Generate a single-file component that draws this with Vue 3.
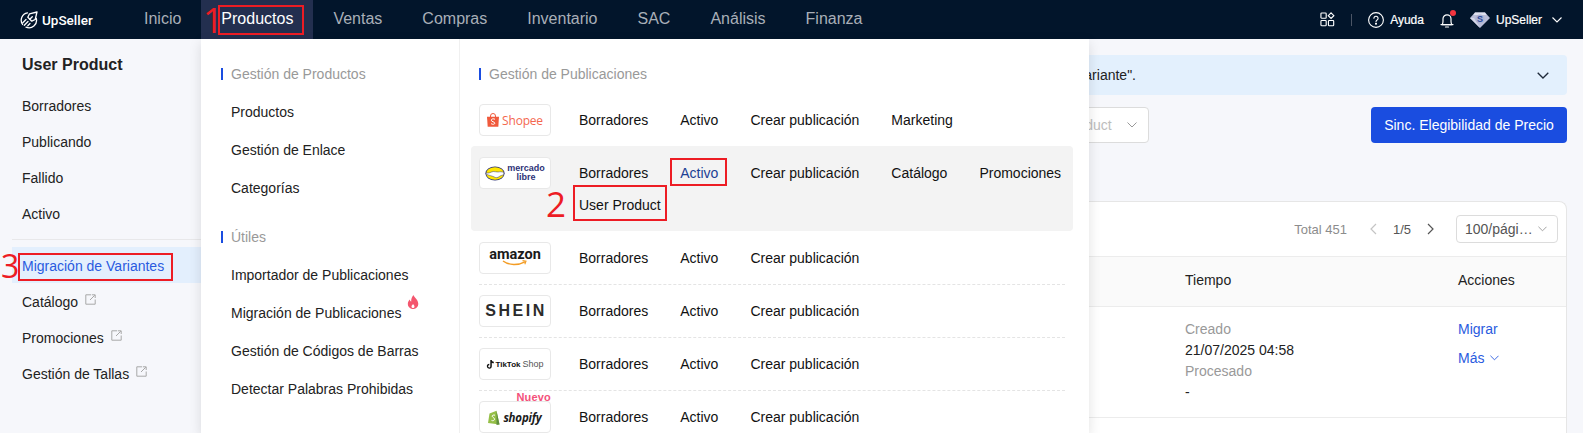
<script setup>
const nav = ['Inicio', 'Productos', 'Ventas', 'Compras', 'Inventario', 'SAC', 'Análisis', 'Finanza']
const side = [
  { label: 'Borradores' },
  { label: 'Publicando' },
  { label: 'Fallido' },
  { label: 'Activo' },
]
const side2 = [
  { label: 'Migración de Variantes', active: true },
  { label: 'Catálogo', ext: true },
  { label: 'Promociones', ext: true },
  { label: 'Gestión de Tallas', ext: true },
]
const basic = ['Borradores', 'Activo', 'Crear publicación']
const platforms = [
  { key: 'shopee', links: [...basic, 'Marketing'] },
  { key: 'meli', links: [...basic, 'Catálogo', 'Promociones', 'User Product'], hover: true },
  { key: 'amazon', links: basic, dashed: true },
  { key: 'shein', links: basic, dashed: true },
  { key: 'tiktok', links: basic, dashed: true },
  { key: 'shopify', links: basic },
]
</script>

<template>
  <div class="page">
    <header class="topbar">
      <div class="brand">
        <svg class="brand-icon" viewBox="0 0 18 18" fill="none" stroke="#fff" stroke-width="1.3" stroke-linecap="round" stroke-linejoin="round">
          <path d="M7.500 1.800A7.500 7.500 0 0 0 2.600 13.500" />
          <path d="M16.300 7.500A7.500 7.500 0 0 1 6 16.200" />
          <path d="M17 1 9.500 2.800 7.800 6.200l4 4 3.400-1.700z" />
          <path d="M12.300 5.700 9.800 8.200" />
          <path d="M6 8.500 2.800 11.700M8 10.500l-3.700 3.700M10 12.500 7.800 14.700" />
        </svg>
        <span>UpSeller</span>
      </div>
      <nav class="nav">
        <a v-for="n in nav" :key="n" class="nav-item" :class="{ current: n === 'Productos' }">{{ n }}</a>
      </nav>
      <div class="top-right">
        <svg class="ic-apps" viewBox="0 0 16 16" fill="none" stroke="#fff" stroke-width="1.2">
          <rect x="1" y="1" width="5.6" height="5.6" rx=".8" />
          <rect x="1" y="9" width="5.6" height="5.6" rx=".8" />
          <rect x="9" y="9" width="5.6" height="5.6" rx=".8" />
          <path d="m11.8.9 3 3-3 3-3-3z" />
        </svg>
        <i class="top-sep"></i>
        <svg class="ic-help" viewBox="0 0 16 16" fill="none" stroke="#fff" stroke-width="1.1">
          <circle cx="8" cy="8" r="7.4" />
          <path d="M5.9 6.3a2.1 2.1 0 1 1 3.2 1.8c-.7.4-1.1.8-1.1 1.6" stroke-linecap="round" />
          <circle cx="8" cy="11.7" r=".5" fill="#fff" />
        </svg>
        <span class="top-label help-label">Ayuda</span>
        <span class="bell">
          <svg viewBox="0 0 14 16" fill="none" stroke="#fff" stroke-width="1.2">
            <path d="M2.2 12.6c.6-1 .8-2 .8-3.4V6.8a4 4 0 0 1 8 0v2.4c0 1.4.2 2.4.8 3.4z" stroke-linejoin="round" />
            <path d="M1 12.6h12M5.500 15h3" stroke-linecap="round" />
          </svg>
          <i class="bell-dot"></i>
        </span>
        <svg class="gem" viewBox="0 0 20 16">
          <path d="M5 .5h10L20 6l-10 10L0 6z" fill="#b9bdd8" />
          <path d="M5 .5h10L16.500 3H3.500z" fill="#dfe1ef" />
          <path d="M0 6l10 10-6-10z" fill="#d5d7e8" />
          <circle cx="10" cy="7" r="4.600" fill="#aeb4d4" />
          <text x="10" y="10.200" text-anchor="middle" class="gem-s">S</text>
        </svg>
        <span class="top-label user-label">UpSeller</span>
        <svg class="top-caret" viewBox="0 0 10 6" fill="none" stroke="#fff" stroke-width="1.100"><path d="m.5.5 4.500 4.500L9.500.5" /></svg>
      </div>
    </header>

    <div class="body">
      <aside class="sidebar">
        <h2 class="side-title">User Product</h2>
        <a v-for="s in side" :key="s.label" class="side-item">{{ s.label }}</a>
        <div class="side-div"></div>
        <a v-for="s in side2" :key="s.label" class="side-item" :class="{ active: s.active }">
          {{ s.label }}
          <svg v-if="s.ext" class="ext" viewBox="0 0 11 11" fill="none" stroke="#a8a8a8" stroke-width="1">
            <path d="M6 .8H.8v9.400h9.400V5.500" />
            <path d="M5 6 9.800 1.200M6.800.8h3.400V4" />
          </svg>
        </a>
      </aside>

      <main class="main">
        <div class="alert">
          <span class="alert-text">Para migrar, seleccione la publicación y haga clic en "Migrar variante".</span>
          <svg class="alert-caret" viewBox="0 0 12 7" fill="none" stroke="#1f2a3a" stroke-width="1.300"><path d="m.7.7 5.300 5.300L11.300.7" /></svg>
        </div>
        <div class="filters">
          <div class="filter-left">
            <div class="select">
              <span>User Product</span>
              <svg viewBox="0 0 10 6" fill="none" stroke="#999" stroke-width="1"><path d="m.5.5 4.500 4.500L9.500.5" /></svg>
            </div>
          </div>
          <button class="primary">Sinc. Elegibilidad de Precio</button>
        </div>
        <section class="card">
          <div class="card-bar">
            <span class="total">Total 451</span>
            <svg class="pg" viewBox="0 0 8 12" fill="none" stroke="#c4c4c4" stroke-width="1.200"><path d="M7 1 2 6l5 5" /></svg>
            <span class="pg-num">1/5</span>
            <svg class="pg" viewBox="0 0 8 12" fill="none" stroke="#555" stroke-width="1.200"><path d="m1 1 5 5-5 5" /></svg>
            <div class="per-page">
              <span>100/pági…</span>
              <svg viewBox="0 0 10 6" fill="none" stroke="#999" stroke-width="1"><path d="m.5.5 4.500 4.500L9.500.5" /></svg>
            </div>
          </div>
          <div class="table-row table-head">
            <div></div>
            <div>Tiempo</div>
            <div>Acciones</div>
          </div>
          <div class="table-row table-data">
            <div></div>
            <div class="times">
              <span class="muted">Creado</span>
              <span>21/07/2025 04:58</span>
              <span class="muted">Procesado</span>
              <span>-</span>
            </div>
            <div class="actions">
              <a>Migrar</a>
              <a class="more">Más
                <svg viewBox="0 0 10 6" fill="none" stroke="#2a5be0" stroke-width="1"><path d="m.5.5 4.500 4.500L9.500.5" /></svg>
              </a>
            </div>
          </div>
        </section>
      </main>
    </div>

    <div class="menu">
      <div class="menu-left">
        <h3 class="menu-title">Gestión de Productos</h3>
        <a class="menu-link">Productos</a>
        <a class="menu-link">Gestión de Enlace</a>
        <a class="menu-link">Categorías</a>
        <h3 class="menu-title second">Útiles</h3>
        <a class="menu-link">Importador de Publicaciones</a>
        <a class="menu-link">Migración de Publicaciones
          <svg class="flame" viewBox="0 0 12 14"><path d="M6.500 0c.5 2.500 4.800 4.500 4.800 9A5.200 5 0 0 1 .8 9c0-2.200 1.200-3.500 2-4.500.2 1.200.7 1.800 1.400 2.200C4 4 5 1.800 6.500 0z" fill="#f4566e" /><path d="M6 9c.3.8 1.500 1.300 1.500 2.600a1.500 1.500 0 0 1-3 0C4.500 10.500 5.500 9.900 6 9z" fill="#fff" /></svg>
        </a>
        <a class="menu-link">Gestión de Códigos de Barras</a>
        <a class="menu-link">Detectar Palabras Prohibidas</a>
      </div>
      <div class="menu-right">
        <h3 class="menu-title">Gestión de Publicaciones</h3>
        <div v-for="p in platforms" :key="p.key" class="plat" :class="{ hover: p.hover, dashed: p.dashed }">
          <div class="plat-logo" :class="'logo-' + p.key">
            <template v-if="p.key === 'shopee'">
              <svg class="shopee-bag" viewBox="0 0 12 14">
                <path d="M0 3.800h12l-.7 10H.7z" fill="#f05a3c" />
                <path d="M3.500 4V3a2.500 2.500 0 0 1 5 0v1" fill="none" stroke="#f05a3c" stroke-width="1" />
                <path d="M8 6.300C6.800 5.500 4.300 5.600 4.300 7.200c0 1.900 3.500 1.300 3.500 3 0 1.300-2.300 1.400-3.700.5" fill="none" stroke="#fff" stroke-width="1" />
              </svg>
              <span class="shopee-text">Shopee</span>
            </template>
            <template v-else-if="p.key === 'meli'">
              <svg class="meli-mark" viewBox="0 0 20 15">
                <ellipse cx="10" cy="7.500" rx="9.600" ry="7" fill="#2d3277" />
                <ellipse cx="10" cy="7.500" rx="8.800" ry="6.200" fill="#ffe600" />
                <path d="M1.200 6.800c2.500 1 4.500-.8 7-1.300 2-.3 3 .8 5 .5 2-.3 3.800-.5 5.600.6v1.600c-1.500 1.500-3 1-4.500 2.300-1.500 1.300-3.500 1.500-5 .5-2-1-5.500-1.700-8.100-2.800z" fill="#fff" stroke="#2d3277" stroke-width=".5" />
              </svg>
              <span class="meli-text">mercado<br />libre</span>
            </template>
            <template v-else-if="p.key === 'amazon'">
              <span class="amazon-text">amazon</span>
              <svg class="amazon-smile" viewBox="0 0 26 6" fill="none" stroke="#f39c24" stroke-width="1.400">
                <path d="M1 1c6 4.500 15 4.500 22 .8" />
                <path d="M20.500.6l3.500.6-1.200 3" stroke-width="1.100" />
              </svg>
            </template>
            <span v-else-if="p.key === 'shein'" class="shein-text">SHEIN</span>
            <template v-else-if="p.key === 'tiktok'">
              <svg class="tt-note" viewBox="0 0 8 9"><path d="M4.300 0h1.500c.1 1 .8 1.700 2 1.800v1.500a3.400 3.400 0 0 1-2-.6v3.400A2.500 2.500 0 1 1 3.300 3.700v1.500a1.100 1.100 0 1 0 1 1z" fill="#111" /></svg>
              <span class="tt-bold">TikTok</span>
              <span class="tt-shop">Shop</span>
            </template>
            <template v-else>
              <svg class="sf-bag" viewBox="0 0 12 15">
                <path d="M1.500 3.500 8.500.8l3 13.800L0 13z" fill="#95bf47" />
                <path d="M8.500.8l3 13.800-3 .3z" fill="#5e8e3e" />
                <path d="M7 5.200C5.500 4.700 4 5.300 4.200 6.300c.2 1.100 2.300 1.300 2.300 2.900 0 1.500-1.800 1.800-3 1.200" fill="none" stroke="#fff" stroke-width="1" />
              </svg>
              <span class="sf-text">shopify</span>
              <span class="nuevo">Nuevo</span>
            </template>
          </div>
          <div class="plat-links">
            <a v-for="l in p.links" :key="l" :class="{ hot: p.hover && l === 'Activo' }">{{ l }}</a>
          </div>
        </div>
      </div>
    </div>

    <i class="mark mark-prod"></i>
    <i class="mark mark-activo"></i>
    <i class="mark mark-up"></i>
    <i class="mark mark-mig"></i>
    <span class="num num-1">1</span>
    <span class="num num-2">2</span>
    <span class="num num-3">3</span>
  </div>
</template>

<style>
html, body { margin: 0; background: #f6f7fb; }
</style>

<style scoped>
.page {
  position: relative;
  width: 1583px;
  height: 433px;
  overflow: hidden;
  background: #f6f7fb;
  font-family: "Liberation Sans", Arial, sans-serif;
  font-size: 14px;
  color: #222;
}
a { color: inherit; text-decoration: none; }
h2, h3 { margin: 0; }

/* top bar */
.topbar {
  height: 39px;
  background: #02152b;
  display: flex;
  align-items: stretch;
  padding-right: 21px;
}
.brand {
  width: 124px;
  box-sizing: border-box;
  padding-left: 20px;
  display: flex;
  align-items: center;
  gap: 4px;
  color: #fff;
  font: 500 13.5px Roboto, "Liberation Sans", sans-serif;
}
.brand-icon { width: 18px; height: 18px; }
.nav { display: flex; }
.nav-item {
  padding: 0 20px;
  line-height: 37px;
  font-size: 16px;
  color: #a9afb8;
}
.nav-item.current { background: #232f4f; color: #fff; }
.top-right {
  margin-left: auto;
  display: flex;
  align-items: center;
  color: #fff;
}
.ic-apps { width: 15px; height: 15px; }
.top-sep { width: 1px; height: 12px; background: #4b5566; margin: 0 16px; }
.ic-help { width: 16px; height: 16px; }
.top-label { font-size: 12px; font-weight: 500; -webkit-text-stroke: .2px #fff; }
.help-label { margin-left: 6px; }
.bell { position: relative; width: 14px; height: 16px; margin-left: 16px; }
.bell svg { display: block; width: 14px; height: 16px; }
.bell-dot {
  position: absolute;
  top: -2px;
  right: -2px;
  width: 6px;
  height: 6px;
  border-radius: 50%;
  background: #f5353f;
}
.gem { width: 20px; height: 16px; margin-left: 16px; }
.gem-s { font: 700 9px "Liberation Sans", sans-serif; fill: #2b4a9a; }
.user-label { margin-left: 6px; }
.top-caret { width: 10px; height: 6px; margin-left: 10px; }

/* shell */
.body { display: flex; height: 394px; }
.sidebar {
  width: 201px;
  flex: none;
  padding-top: 13px;
  box-sizing: border-box;
}
.side-title {
  font-size: 16px;
  font-weight: 700;
  line-height: 26px;
  padding-left: 22px;
  margin-bottom: 10px;
  color: #222;
}
.side-item {
  display: block;
  height: 36px;
  line-height: 36px;
  margin-left: 12px;
  padding-left: 10px;
}
.side-item.active {
  height: 35px;
  padding-top: 1px;
  margin-bottom: 1px;
  background: #e3effd;
  color: #2a5be0;
}
.ext { width: 11px; height: 11px; margin-left: 3px; vertical-align: 2px; }
.side-div { height: 1px; background: #e8e8ea; margin: 7px 0 7px 12px; }

.main { flex: 1; min-width: 0; padding: 16px 16px 0; }
.alert {
  height: 40px;
  border-radius: 4px;
  background: #e3f0fd;
  display: flex;
  align-items: center;
  justify-content: space-between;
  padding-right: 18px;
}
.alert-text {
  width: 919px;
  text-align: right;
  white-space: nowrap;
  overflow: hidden;
}
.alert-caret { width: 12px; height: 7px; }
.filters {
  margin-top: 12px;
  height: 36px;
  display: flex;
  justify-content: space-between;
}
.filter-left { width: 932px; display: flex; justify-content: flex-end; }
.select {
  width: 130px;
  box-sizing: border-box;
  border: 1px solid #dcdcdc;
  border-radius: 4px;
  background: #fff;
  display: flex;
  align-items: center;
  justify-content: space-between;
  padding: 0 11px 0 10px;
  color: #bdbdbd;
}
.select svg { width: 10px; height: 6px; }
.primary {
  width: 196px;
  border: 0;
  border-radius: 4px;
  background: #1a4de0;
  color: #fff;
  font: 14px "Liberation Sans", Arial, sans-serif;
  padding: 0;
}
.card {
  margin-top: 58px;
  background: #fff;
  border: 1px solid #e6e6e6;
  border-bottom: 0;
  border-radius: 8px 8px 0 0;
  height: 240px;
}
.card-bar {
  height: 54px;
  box-sizing: border-box;
  display: flex;
  align-items: center;
  justify-content: flex-end;
  padding-right: 8px;
}
.total { color: #8c8c8c; font-size: 13px; margin-right: 22px; }
.pg { width: 8px; height: 12px; }
.pg-num { font-size: 13px; color: #555; margin: 0 16px; }
.per-page {
  margin-left: 21px;
  width: 102px;
  height: 28px;
  box-sizing: border-box;
  border: 1px solid #dcdcdc;
  border-radius: 4px;
  display: flex;
  align-items: center;
  justify-content: space-between;
  padding: 0 10px 0 8px;
  color: #555;
}
.per-page svg { width: 9px; height: 6px; }
.table-row {
  display: grid;
  grid-template-columns: 1fr 273px 108px;
  border-top: 1px solid #ececec;
}
.table-head { height: 49px; line-height: 47px; background: #fafafa; }
.table-data { height: 110px; border-bottom: 1px solid #ececec; }
.times {
  display: flex;
  flex-direction: column;
  padding-top: 12px;
  line-height: 21px;
}
.muted { color: #999; }
.actions {
  display: flex;
  flex-direction: column;
  padding-top: 12px;
  color: #2a5be0;
  line-height: 21px;
  gap: 8px;
}
.more svg { width: 9px; height: 6px; margin-left: 2px; vertical-align: 2px; }

/* products menu */
.menu {
  position: absolute;
  left: 201px;
  top: 39px;
  width: 888px;
  height: 394px;
  background: #fff;
  box-shadow: 0 4px 12px rgba(0, 0, 0, .12);
  display: flex;
}
.menu-left {
  width: 259px;
  flex: none;
  box-sizing: border-box;
  border-right: 1px solid #f0f0f0;
  padding: 25px 0 0 20px;
}
.menu-right { flex: 1; padding: 25px 16px 0 11px; }
.menu-title {
  position: relative;
  font-size: 14px;
  font-weight: 400;
  line-height: 20px;
  color: #999;
  padding-left: 10px;
  margin-bottom: 9px;
}
.menu-title::before {
  content: "";
  position: absolute;
  left: 0;
  top: 4px;
  width: 2px;
  height: 12px;
  background: #1a4de0;
}
.menu-title.second { margin-top: 20px; }
.menu-right .menu-title { margin-left: 8px; padding-left: 10px; }
.menu-link {
  display: block;
  height: 38px;
  line-height: 38px;
  padding-left: 10px;
  white-space: nowrap;
}
.flame { width: 12px; height: 14px; vertical-align: 9px; margin-left: 2px; }

.plat {
  display: flex;
  box-sizing: border-box;
  padding: 11px 8px 10px;
  gap: 28px;
  border-radius: 4px;
}
.plat.hover { background: #f3f3f3; }
.plat.dashed { position: relative; }
.plat.dashed::after {
  content: "";
  position: absolute;
  left: 8px;
  right: 8px;
  bottom: -1px;
  border-bottom: 1px dashed #e4e4e4;
}
.plat-logo {
  position: relative;
  flex: none;
  width: 72px;
  height: 32px;
  box-sizing: border-box;
  border: 1px solid #e8e8e8;
  border-radius: 4px;
  background: #fff;
  display: flex;
  align-items: center;
  justify-content: center;
}
.plat-links {
  flex: 1;
  display: flex;
  flex-wrap: wrap;
  column-gap: 32px;
  line-height: 32px;
  color: #111;
}
.plat-links .hot { color: #1c3f94; }

.shopee-bag { width: 12px; height: 14px; margin-right: 3px; }
.shopee-text { font: 12px "Open Sans", sans-serif; color: #f4684f; letter-spacing: -.2px; }
.meli-mark { width: 20px; height: 15px; margin-right: 2px; }
.meli-text {
  font: 700 9px/9px "Liberation Sans", sans-serif;
  color: #2d3277;
  text-align: center;
}
.logo-amazon { flex-direction: column; }
.amazon-text { font: 700 14.5px/13px Roboto, "Liberation Sans", sans-serif; color: #1a1a1a; margin-top: -2px; }
.amazon-smile { width: 26px; height: 6px; margin-top: -1px; }
.shein-text { font: 700 16px "Liberation Sans", sans-serif; letter-spacing: 2.5px; color: #2b2b2b; margin-right: -2px; }
.tt-note { width: 8px; height: 9px; margin-right: 1px; }
.tt-bold { font: 700 8px "Liberation Sans", sans-serif; color: #111; }
.tt-shop { font: 9px "Liberation Sans", sans-serif; color: #555; margin-left: 2px; }
.sf-bag { width: 12px; height: 15px; margin-right: 3px; }
.sf-text { font: italic 700 11.5px "Open Sans", sans-serif; color: #1c1c1c; letter-spacing: -.2px; }
.nuevo {
  position: absolute;
  right: -1px;
  top: -11px;
  font: 700 11px/13px "Liberation Sans", sans-serif;
  letter-spacing: .2px;
  color: #f4517a;
}

/* red annotations drawn over the screenshot */
.mark { position: absolute; box-sizing: border-box; border: 2px solid #ed1c24; }
.mark-prod { left: 218px; top: 5px; width: 86px; height: 30px; }
.mark-activo { left: 670px; top: 158px; width: 57px; height: 28px; }
.mark-up { left: 573px; top: 185px; width: 94px; height: 36px; }
.mark-mig { left: 18px; top: 253px; width: 155px; height: 28px; }
.num { position: absolute; color: #ed1c24; font-family: "Open Sans", sans-serif; line-height: 1; }
.num-1 { left: 203px; top: 2px; font-size: 35px; }
.num-2 { left: 546px; top: 186px; font-size: 35px; }
.num-3 { left: 1px; top: 250px; font-size: 32px; }
</style>
